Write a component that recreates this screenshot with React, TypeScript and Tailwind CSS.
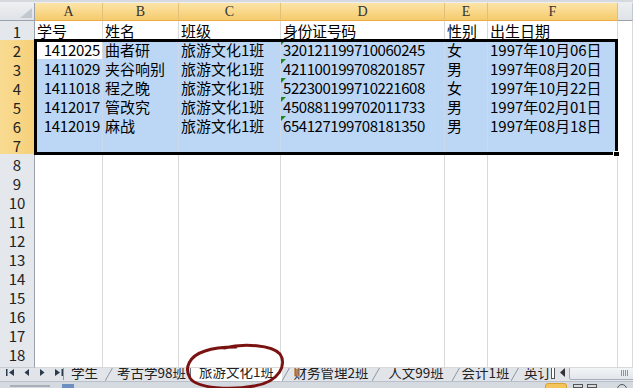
import React from 'react'

const GRID = 'grid grid-cols-[35px_68px_76px_102px_164px_43px_130px_1fr]'
const COLS = ['A', 'B', 'C', 'D', 'E', 'F', 'G']

const HEAD = ['学号', '姓名', '班级', '身份证号码', '性别', '出生日期']

const DATA = [
  ['1412025', '曲者研', '旅游文化1班', '320121199710060245', '女', '1997年10月06日'],
  ['1411029', '夹谷响别', '旅游文化1班', '421100199708201857', '男', '1997年08月20日'],
  ['1411018', '程之晚', '旅游文化1班', '522300199710221608', '女', '1997年10月22日'],
  ['1412017', '管改究', '旅游文化1班', '450881199702011733', '男', '1997年02月01日'],
  ['1412019', '麻战', '旅游文化1班', '654127199708181350', '男', '1997年08月18日'],
]

function Slash() {
  return (
    <svg width="8" height="18" className="shrink-0">
      <line x1="0" y1="17" x2="8" y2="3" stroke="#8d96a2" strokeWidth="1" />
    </svg>
  )
}

function Tab({ name, w, active }: { name: string; w: string; active?: boolean }) {
  return (
    <div
      className={`${w} shrink-0 h-[18px] flex items-center justify-center whitespace-nowrap leading-none ${
        active ? 'bg-white -mt-px border-l border-[#6f7985]' : ''
      }`}
    >
      {name}
    </div>
  )
}

function Cell({ row, col, text }: { row: number; col: number; text?: string }) {
  const selected = row >= 2 && row <= 7 && col <= 5 && !(row === 2 && col === 0)
  const isNum = row >= 2 && col === 0
  const flag = row >= 2 && row <= 6 && col === 3
  return (
    <div
      className={`relative border-r border-b overflow-hidden whitespace-nowrap leading-[19px] text-[15px] text-black ${
        selected ? 'bg-[#bcd7f6] border-[#cbd9e9]' : 'bg-white border-[#d9d9d9]'
      } ${isNum ? 'text-right pr-[2px] tracking-[-0.3px]' : 'pl-[2px]'} ${col === 3 ? 'tracking-[-0.45px]' : ''}`}
    >
      {flag && (
        <span className="absolute left-0 top-0 w-0 h-0 border-t-[5px] border-r-[5px] border-t-[#1d8a1d] border-r-transparent" />
      )}
      {text}
    </div>
  )
}

export default function App() {
  const rows = Array.from({ length: 18 }, (_, i) => i + 1)

  return (
    <div className="relative w-[633px] h-[388px] overflow-hidden bg-white font-['Noto_Sans_CJK_SC',sans-serif] select-none">
      {/* top strip */}
      <div className="h-[3px] bg-[#d6dae0] border-b border-[#eceef1]" />

      {/* column header */}
      <div className={`${GRID} h-[18px]`}>
        <div className="relative bg-gradient-to-b from-[#eef0f3] to-[#dfe2e7] border-r border-b border-[#9aa3ad]">
          <svg width="12" height="10" className="absolute right-[2px] bottom-[2px]">
            <polygon points="12,0 12,10 0,10" fill="#c3c8cf" />
          </svg>
        </div>
        {COLS.map((c, i) => (
          <div
            key={c}
            className={`flex items-center justify-center border-r border-b text-[14px] leading-none font-['Liberation_Serif',serif] text-[#333] ${
              i < 6
                ? 'bg-gradient-to-b from-[#fce5a8] to-[#f5cb6b] border-r-[#e3c078] border-b-[#eea845]'
                : 'bg-gradient-to-b from-[#eceef1] to-[#dfe2e7] border-r-[#c5cad1] border-b-[#9aa3ad]'
            }`}
          >
            {i < 6 ? c : null}
          </div>
        ))}
      </div>

      {/* rows */}
      {rows.map((r) => {
        const values = r === 1 ? HEAD : r >= 2 && r <= 6 ? DATA[r - 2] : []
        const sel = r >= 2 && r <= 7
        return (
          <div key={r} className={`${GRID} h-[19px]`}>
            <div
              className={`flex items-center justify-center border-r border-b text-[15px] text-[#222] ${
                sel
                  ? 'bg-gradient-to-r from-[#f9dc92] to-[#f6d07a] border-r-[#eea845] border-b-[#e7c57c]'
                  : 'bg-[#e4e7ec] border-r-[#9aa3ad] border-b-[#c8cdd4]'
              }`}
            >
              {r}
            </div>
            {COLS.map((c, ci) => (
              <Cell key={c} row={r} col={ci} text={values[ci]} />
            ))}
          </div>
        )
      })}

      {/* selection border + fill handle */}
      <div className="absolute left-[34px] top-[39px] w-[584px] h-[116px] border-[3px] border-black pointer-events-none" />
      <div className="absolute left-[613px] top-[151px] w-[7px] h-[6px] bg-black border border-white" />

      {/* sheet tabs */}
      <div className="flex items-center h-[18px] bg-[#e1e5ea] border-t border-[#a5adb8] text-[13.5px] text-[#222]">
        <div className="flex items-center gap-[9px] w-[63px] shrink-0 pl-[6px] text-[#2c3a4d]">
          <svg width="9" height="9" viewBox="0 0 9 9">
            <rect x="0" y="1" width="1.5" height="7" fill="currentColor" />
            <polygon points="8,1 8,8 3,4.5" fill="currentColor" />
          </svg>
          <svg width="6" height="9" viewBox="0 0 6 9">
            <polygon points="5,1 5,8 0.5,4.5" fill="currentColor" />
          </svg>
          <svg width="6" height="9" viewBox="0 0 6 9">
            <polygon points="1,1 1,8 5.5,4.5" fill="currentColor" />
          </svg>
          <svg width="9" height="9" viewBox="0 0 9 9">
            <polygon points="1,1 1,8 6,4.5" fill="currentColor" />
            <rect x="7.5" y="1" width="1.5" height="7" fill="currentColor" />
          </svg>
        </div>
        <div className="w-px h-[14px] bg-[#8d96a2] shrink-0" />
        <Tab name="学生" w="w-[41px]" />
        <Slash />
        <Tab name="考古学98班" w="w-[77px]" />
        <Tab name="旅游文化1班" w="w-[92px]" active />
        <Slash />
        <Tab name="财务管理2班" w="w-[82px]" />
        <Slash />
        <Tab name="人文99班" w="w-[72px]" />
        <Slash />
        <Tab name="会计1班" w="w-[51px]" />
        <Slash />
        <div className="pl-[5px] shrink-0 whitespace-nowrap leading-none">英订</div>
        <div className="w-[4px] h-[12px] shrink-0 border border-[#555] bg-white" />
        <div className="w-[14px] shrink-0 flex justify-center text-[#333]">
          <svg width="5" height="9" viewBox="0 0 5 9">
            <polygon points="5,0 5,9 0,4.5" fill="currentColor" />
          </svg>
        </div>
        <div className="flex-1 h-[14px] mr-[-4px] border border-[#a7afba] rounded-[2px] bg-gradient-to-b from-[#f4f6f8] to-[#e2e6eb] flex items-center justify-end pr-[8px]">
          <div className="flex gap-[1px]">
            <span className="w-px h-[6px] bg-[#8a939e]" />
            <span className="w-px h-[6px] bg-[#8a939e]" />
            <span className="w-px h-[6px] bg-[#8a939e]" />
            <span className="w-px h-[6px] bg-[#8a939e]" />
          </div>
        </div>
      </div>

      {/* status bar */}
      <div className="flex items-start h-[8px] bg-[#d5dae1] border-t border-[#b9c0ca]">
        <div className="w-[40px] h-[2px] mt-[3px] ml-[10px] bg-[#8a939e] opacity-60" />
        <div className="w-[12px] h-[4px] mt-[2px] ml-[12px] bg-[#6c8fbf]" />
        <div className="ml-auto w-[22px] h-[6px] mt-[1px] rounded-t-[3px] bg-[#f5c45a] border border-[#d9a234]" />
        <div className="w-[10px] h-[4px] mt-[2px] ml-[6px] border border-[#555]" />
        <div className="w-[10px] h-[4px] mt-[2px] ml-[4px] border border-[#555]" />
        <div className="w-[10px] h-[6px] mt-[2px] ml-[20px] mr-[6px] rounded-t-full border border-[#555]" />
      </div>

      {/* hand-drawn red ring around the active tab */}
      <svg
        className="absolute left-[182px] top-[342px] pointer-events-none"
        width="106"
        height="50"
        viewBox="0 0 106 50"
      >
        <path
          d="M42 6 C62 1 90 3 98 12 C105 22 98 40 72 44 C50 48 15 47 8 36 C2 26 7 14 23 9 C31 6 42 5 54 5"
          fill="none"
          stroke="#7b1212"
          strokeWidth="3"
          strokeLinecap="round"
        />
      </svg>
    </div>
  )
}
